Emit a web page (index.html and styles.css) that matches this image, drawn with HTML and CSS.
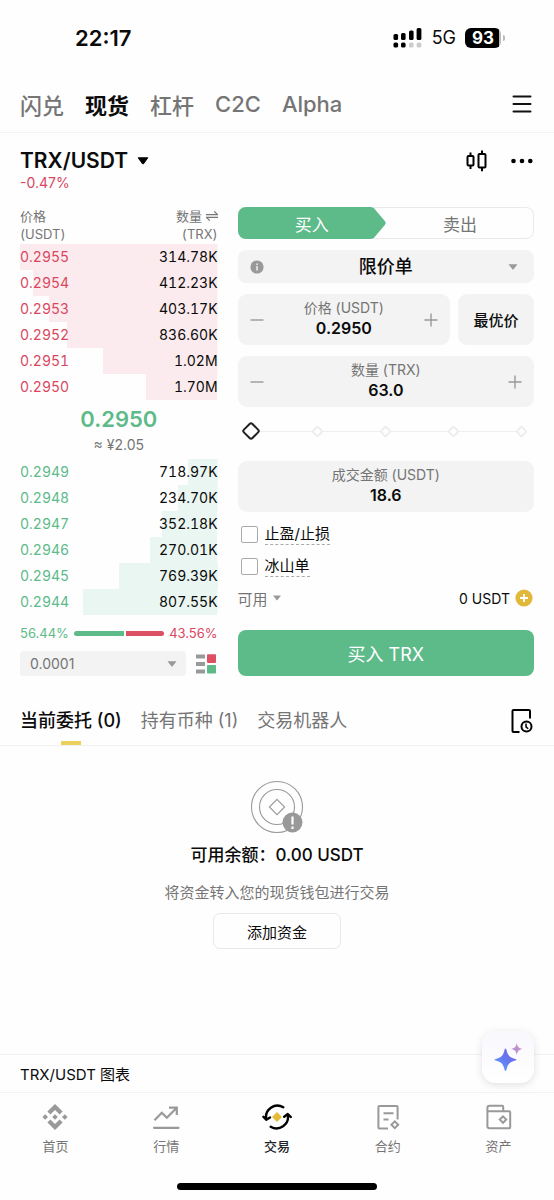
FILE: index.html
```html
<!DOCTYPE html>
<html lang="zh-CN">
<head>
<meta charset="utf-8">
<meta name="viewport" content="width=device-width, initial-scale=1">
<title>TRX/USDT 现货</title>
<link rel="stylesheet" href="styles.css">
</head>
<body>
<div class="app">
  <div class="status">
    <span class="status-time">22:17</span>
    <div class="status-right">
      <svg width="30" height="20" viewBox="0 0 30 20" aria-hidden="true">
        <rect x="0.5" y="6" width="4.6" height="6" rx="1.5"/><rect x="8" y="5" width="4.6" height="7" rx="1.5"/>
        <rect x="16" y="2.5" width="4.6" height="9.5" rx="1.5"/><rect x="23.6" y="0" width="4.8" height="12" rx="1.5"/>
        <rect x="0.5" y="14.6" width="4.6" height="5" rx="1.6"/><rect x="8" y="14.6" width="4.6" height="5" rx="1.6"/>
        <rect x="16" y="14.6" width="4.6" height="5" rx="1.6" fill="#ccc"/><rect x="23.6" y="14.6" width="4.8" height="5" rx="1.6" fill="#ccc"/>
      </svg>
      <span class="status-net">5G</span>
      <span class="battery">93</span>
    </div>
  </div>

  <nav class="modes">
    <a href="#">闪兑</a><a href="#" class="on">现货</a><a href="#">杠杆</a><a href="#">C2C</a><a href="#">Alpha</a>
    <button class="icon-btn push" aria-label="菜单">
      <svg width="20" height="20" viewBox="0 0 20 20" stroke="#111" stroke-width="2" stroke-linecap="round"><path d="M1.5 2.5h17M1.5 10h17M1.5 17.5h17"/></svg>
    </button>
  </nav>

  <header class="pair">
    <div>
      <button class="pair-name">TRX/USDT <svg width="12" height="8" viewBox="0 0 12 8"><path d="M1.2.8h9.600L6.500 6.800q-.5.6-1 0z" stroke="#000" stroke-linejoin="round"/></svg></button>
      <div class="pair-change">-0.47%</div>
    </div>
    <div class="pair-tools">
      <button class="icon-btn" aria-label="K线">
        <svg width="22" height="22" viewBox="0 0 22 22" fill="none" stroke="#000" stroke-width="2"><rect x="1.500" y="6" width="6" height="9.600" rx="1"/><path d="M4.500 2.600V6M4.500 15.600V19"/><rect x="12.500" y="4" width="7" height="13.600" rx="1"/><path d="M16 .5V4M16 17.600v3.600"/></svg>
      </button>
      <button class="icon-btn" aria-label="更多">
        <svg width="22" height="6" viewBox="0 0 22 6"><circle cx="2.500" cy="3" r="2.300"/><circle cx="11" cy="3" r="2.300"/><circle cx="19.300" cy="3" r="2.300"/></svg>
      </button>
    </div>
  </header>

  <main class="trade">
    <section class="book">
      <table class="levels asks">
        <thead><tr><th>价格<br>(USDT)</th><th>数量 <svg width="12" height="10" viewBox="0 0 12 10" fill="none" stroke="#757575" stroke-width="1.2"><path d="M0 3.600h11.500L8.200.4M12 6.400H.5l3.300 3.200"/></svg><br>(TRX)</th></tr></thead>
        <tbody>
          <tr style="--depth:100%"><td>0.2955</td><td>314.78K</td></tr>
          <tr style="--depth:93%"><td>0.2954</td><td>412.23K</td></tr>
          <tr style="--depth:85%"><td>0.2953</td><td>403.17K</td></tr>
          <tr style="--depth:76%"><td>0.2952</td><td>836.60K</td></tr>
          <tr style="--depth:58%"><td>0.2951</td><td>1.02M</td></tr>
          <tr style="--depth:36%"><td>0.2950</td><td>1.70M</td></tr>
        </tbody>
      </table>
      <div class="last">
        <div class="last-price">0.2950</div>
        <div class="last-fiat">≈ ¥2.05</div>
      </div>
      <table class="levels bids">
        <tbody>
          <tr style="--depth:15%"><td>0.2949</td><td>718.97K</td></tr>
          <tr style="--depth:20%"><td>0.2948</td><td>234.70K</td></tr>
          <tr style="--depth:28%"><td>0.2947</td><td>352.18K</td></tr>
          <tr style="--depth:34%"><td>0.2946</td><td>270.01K</td></tr>
          <tr style="--depth:50%"><td>0.2945</td><td>769.39K</td></tr>
          <tr style="--depth:68%"><td>0.2944</td><td>807.55K</td></tr>
        </tbody>
      </table>
      <div class="ratio">
        <span class="up">56.44%</span>
        <div class="ratio-bar"><i class="ratio-buy" style="flex-grow:56.44"></i><i class="ratio-sell" style="flex-grow:43.56"></i></div>
        <span class="down">43.56%</span>
      </div>
      <div class="precision">
        <div class="pick">
          <select class="pick-small" aria-label="精度"><option>0.0001</option></select>
          <svg class="caret" width="10" height="6" viewBox="0 0 10 6"><path d="M.5.3h9L5.400 5.400q-.4.4-.8 0z"/></svg>
        </div>
        <button class="icon-btn" aria-label="盘口布局">
          <svg width="20" height="20" viewBox="0 0 20 20"><g fill="#999"><rect y=".5" width="9" height="4"/><rect y="8" width="9" height="4"/><rect y="15.500" width="9" height="4"/></g><rect x="11" y=".3" width="9" height="8.600" rx=".8" fill="#dc5063"/><rect x="11" y="11" width="9" height="8.600" rx=".8" fill="#5dba89"/></svg>
        </button>
      </div>
    </section>

    <form class="ticket">
      <div class="sides">
        <button type="button" class="side-buy">买入</button>
        <button type="button" class="side-sell">卖出</button>
      </div>
      <div class="pick">
        <svg class="info" width="14" height="14" viewBox="0 0 14 14"><circle cx="7" cy="7" r="6.600" fill="#999"/><path d="M7 6v4.600M7 3.400V5" stroke="#f3f3f3" stroke-width="1.400"/></svg>
        <select class="pick-type" aria-label="订单类型"><option>限价单</option></select>
        <svg class="caret" width="10" height="6" viewBox="0 0 10 6"><path d="M.5.3h9L5.400 5.400q-.4.4-.8 0z"/></svg>
      </div>
      <div class="price-row">
        <div class="field">
          <button type="button" class="icon-btn" aria-label="降低价格"><svg width="14" height="14" viewBox="0 0 14 14" stroke="#999" stroke-width="1.400"><path d="M.5 7h13"/></svg></button>
          <div class="field-mid"><label for="price">价格 (USDT)</label><input id="price" value="0.2950"></div>
          <button type="button" class="icon-btn" aria-label="提高价格"><svg width="14" height="14" viewBox="0 0 14 14" stroke="#999" stroke-width="1.400"><path d="M.5 7h13M7 .5v13"/></svg></button>
        </div>
        <button type="button" class="best">最优价</button>
      </div>
      <div class="field">
        <button type="button" class="icon-btn" aria-label="减少数量"><svg width="14" height="14" viewBox="0 0 14 14" stroke="#999" stroke-width="1.400"><path d="M.5 7h13"/></svg></button>
        <div class="field-mid"><label for="qty">数量 (TRX)</label><input id="qty" value="63.0"></div>
        <button type="button" class="icon-btn" aria-label="增加数量"><svg width="14" height="14" viewBox="0 0 14 14" stroke="#999" stroke-width="1.400"><path d="M.5 7h13M7 .5v13"/></svg></button>
      </div>
      <div class="slider">
        <div class="ticks"><i></i><i></i><i></i><i></i><i></i></div>
        <input type="range" min="0" max="100" value="0" aria-label="数量比例">
      </div>
      <div class="field">
        <div class="field-mid"><label for="total">成交金额 (USDT)</label><input id="total" value="18.6"></div>
      </div>
      <div class="options">
        <div class="option"><input type="checkbox" id="tpsl"><label for="tpsl">止盈/止损</label></div>
        <div class="option"><input type="checkbox" id="iceberg"><label for="iceberg">冰山单</label></div>
        <div class="avail">
          <button type="button" class="avail-label">可用 <svg width="8" height="6" viewBox="0 0 10 6" fill="#999"><path d="M0 0h10L5.600 5.600q-.6.6-1.200 0z"/></svg></button>
          <span class="avail-value">0 USDT</span>
          <button type="button" class="icon-btn" aria-label="充值"><svg width="18" height="18" viewBox="0 0 18 18"><circle cx="9" cy="9" r="8.600" fill="#e2b83a"/><path d="M9 5v8M5 9h8" stroke="#fff" stroke-width="1.800"/></svg></button>
        </div>
      </div>
      <button type="button" class="submit">买入 TRX</button>
    </form>
  </main>

  <nav class="tabs">
    <a href="#" class="on">当前委托 (0)</a><a href="#">持有币种 (1)</a><a href="#">交易机器人</a>
    <button class="icon-btn push" aria-label="历史委托">
      <svg width="24" height="24" viewBox="0 0 24 24" fill="none" stroke="#000" stroke-width="2"><path d="M9.500 23H3.500q-1 0-1-1V2q0-1 1-1H19q1 0 1 1v7.500"/><circle cx="16.500" cy="17.500" r="5"/><path d="M16 14.600v3.200l2.200 2" stroke-width="1.500"/></svg>
    </button>
  </nav>

  <section class="empty">
    <svg width="54" height="54" viewBox="0 0 54 54" fill="none" stroke="#999" stroke-width="1.100"><circle cx="27" cy="27" r="25.500"/><circle cx="27" cy="27" r="17.500"/><path d="M27 19.400l7.600 7.600-7.600 7.600-7.600-7.600z"/><circle cx="42.500" cy="42.500" r="10" fill="#999" stroke="none"/><path d="M42.500 36.500v8M42.500 46.600v2.400" stroke="#fff" stroke-width="2.200"/></svg>
    <h2>可用余额：0.00 USDT</h2>
    <p>将资金转入您的现货钱包进行交易</p>
    <button class="add">添加资金</button>
  </section>

  <footer class="bottom">
    <div class="chart-bar">
      <a href="#">TRX/USDT 图表</a>
      <button class="ai" aria-label="AI 助手">
        <svg width="30" height="30" viewBox="0 0 30 30"><defs><linearGradient id="g1" x1="0" y1="1" x2="1" y2="0"><stop offset="0" stop-color="#5fb0ff"/><stop offset=".5" stop-color="#6379ee"/><stop offset="1" stop-color="#8b5fd8"/></linearGradient><linearGradient id="g2" x1="0" y1="1" x2="1" y2="0"><stop offset="0" stop-color="#a08ae0"/><stop offset="1" stop-color="#dc9ab8"/></linearGradient></defs><path fill="url(#g1)" d="M12.500 6.500q.6 0 .9 1c1.300 6 3 7.800 9.600 9.700q1 .4 0 1c-6.600 1.900-8.300 3.700-9.600 9.700q-.9 2-1.800 0c-1.300-6-3-7.800-9.600-9.700q-1-.6 0-1c6.600-1.900 8.300-3.700 9.600-9.700q.3-1 .9-1z"/><path fill="url(#g2)" d="M23.800 1c.8 3.800 1.800 5 5.700 5.900-3.900.9-4.900 2-5.700 5.800-.8-3.800-1.800-4.900-5.700-5.800 3.900-.9 4.900-2.100 5.700-5.900z"/></svg>
      </button>
    </div>
    <nav class="dock">
      <a href="#"><svg width="28" height="28" viewBox="0 0 28 28" fill="#999"><path d="M14 1l7.600 7.600-3 3L14 7l-4.600 4.600-3-3zM14 27l7.600-7.600-3-3L14 21l-4.600-4.600-3 3zM14 11.200l2.800 2.800-2.800 2.800-2.800-2.800zM4.200 11.200L7 14l-2.800 2.800L1.400 14zM23.800 11.200l2.800 2.800-2.800 2.800L21 14z"/></svg>首页</a>
      <a href="#"><svg width="28" height="28" viewBox="0 0 28 28" fill="none" stroke="#999" stroke-width="2.200"><path d="M2 24.800h24.500" stroke-linecap="round"/><path d="M2.500 17.200l7.300-7.400 5 5L24 5.400M17 4.600h7.800V12"/></svg>行情</a>
      <a href="#" class="on"><svg width="32" height="28" viewBox="0 0 32 28" fill="none" stroke="#000" stroke-width="2.400" stroke-linecap="round" stroke-linejoin="round"><path d="M22.300 4.200A11.500 11.500 0 0 0 5.200 16.200M2.400 13.800l2.800 3 3.800-2.400M9.700 23.800A11.500 11.500 0 0 0 26.800 11.800M23.200 13.800l3.600-2.800 3 3"/><path d="M16 9l5 5-5 5-5-5z" fill="#e6bb3c" stroke="none"/></svg>交易</a>
      <a href="#"><svg width="28" height="28" viewBox="0 0 28 28" fill="none" stroke="#999" stroke-width="2"><path d="M14 25.400H5.400q-1 0-1-1V4q0-1 1-1h17.200q1 0 1 1v12.500M9.500 10.200h10M9.500 16.400h5"/><path d="M20.800 18.400l3.400 3.400-3.400 3.400-3.400-3.400z"/></svg>合约</a>
      <a href="#"><svg width="28" height="28" viewBox="0 0 28 28" fill="none" stroke="#999" stroke-width="2"><path d="M2.400 8.200V5q0-2.200 2.200-2.200h12.600q1 0 1 1v4.400M2.400 8.200h21.800q1 0 1 1v15q0 1-1 1H4.600q-2.200 0-2.200-2.200z"/><path d="M18 13.400l3.200 3.200-3.200 3.200-3.200-3.200z"/></svg>资产</a>
    </nav>
    <div class="home-bar"></div>
  </footer>
</div>
</body>
</html>
```

FILE: styles.css
```css
* { box-sizing: border-box; }

body {
  margin: 0;
  background: #fefefe;
  color: #0b0b0b;
  font-family: Inter, "Noto Sans CJK SC", sans-serif;
  font-size: 14px;
}

a { color: inherit; text-decoration: none; }
svg { display: block; flex: none; }

button, input, select {
  font: inherit;
  color: inherit;
  border: 0;
  background: none;
  padding: 0;
  margin: 0;
  outline: 0;
}

.app { min-height: 100vh; display: flex; flex-direction: column; }
.icon-btn { display: flex; align-items: center; justify-content: center; }
.push { margin-left: auto; }
.up { color: #5dba89; }
.down { color: #d9475f; }

/* status bar */
.status {
  display: flex;
  justify-content: space-between;
  align-items: center;
  height: 75px;
  padding: 0 49px 0 75px;
}
.status-time { font-size: 22px; font-weight: 600; }
.status-right { display: flex; align-items: center; gap: 9px; }
.status-net { font-size: 18px; line-height: 20px; }
.battery {
  position: relative;
  width: 36px;
  height: 20px;
  margin-right: 4px;
  border-radius: 6px;
  background: linear-gradient(90deg, #000 34px, #bbb 34px);
  color: #fff;
  font-size: 17px;
  font-weight: 700;
  line-height: 20px;
  text-align: center;
}
.battery::after {
  content: "";
  position: absolute;
  right: -4px;
  top: 7px;
  width: 2px;
  height: 6px;
  border-radius: 0 2px 2px 0;
  background: #bbb;
}

/* mode tabs */
.modes {
  display: flex;
  align-items: center;
  gap: 21px;
  height: 58px;
  padding: 0 22px 0 20px;
  border-bottom: 1px solid #f3f3f3;
  color: #757575;
  font-size: 22px;
  font-weight: 500;
}
.modes .on { color: #0b0b0b; font-weight: 700; }

/* pair header */
.pair {
  display: flex;
  justify-content: space-between;
  padding: 15px 21px 16px 20px;
}
.pair-name {
  display: flex;
  align-items: center;
  gap: 9px;
  font-size: 21px;
  font-weight: 600;
  line-height: 26px;
}
.pair-change { color: #d9475f; line-height: 17px; }
.pair-tools { display: flex; align-items: center; gap: 23px; height: 26px; }

/* order book and ticket */
.trade {
  display: grid;
  grid-template-columns: 2fr 3fr;
  gap: 20px;
  padding: 0 20px;
}
.book, .ticket { min-width: 0; }

.levels { width: 100%; border-collapse: collapse; font-variant-numeric: tabular-nums; }
.levels th {
  padding: 0 0 1px;
  color: #757575;
  font-size: 13px;
  font-weight: 400;
  line-height: 18px;
  text-align: left;
}
.levels th svg { display: inline-block; }
.levels td { height: 26px; padding: 0; line-height: 26px; }
.levels th:last-child, .levels td:last-child { text-align: right; }
.levels tbody tr { background: linear-gradient(var(--fill), var(--fill)) right / var(--depth) 100% no-repeat; }
.asks { --fill: #fbebee; }
.bids { --fill: #e9f6f1; }
.asks td:first-child { color: #d9475f; }
.bids td:first-child { color: #5dba89; }

.last { padding: 4px 0 3px; text-align: center; }
.last-price { color: #5dba89; font-size: 22px; font-weight: 600; line-height: 30px; }
.last-fiat { color: #757575; line-height: 22px; }

.ratio {
  display: flex;
  align-items: center;
  gap: 5px;
  margin-top: 8px;
  font-size: 13px;
  line-height: 20px;
}
.ratio-bar { display: flex; flex: 1; gap: 2px; }
.ratio-bar i { height: 5px; }
.ratio-buy { background: #5dba89; border-radius: 3px 0 0 3px; }
.ratio-sell { background: #dc5063; border-radius: 0 3px 3px 0; }

.precision { display: flex; gap: 10px; margin-top: 8px; }
.precision .pick { flex: 1; border-radius: 4px; }
.precision .icon-btn { margin-right: 2px; }

.pick {
  position: relative;
  display: flex;
  background: #f3f3f3;
  border-radius: 8px;
}
.pick select { appearance: none; width: 100%; }
.pick-small { height: 25px; padding: 0 10px; color: #757575; }
.pick-type {
  height: 33px;
  font-size: 18px;
  font-weight: 500;
  text-align: center;
  text-align-last: center;
}
.caret, .info { position: absolute; top: 0; bottom: 0; margin: auto 0; pointer-events: none; }
.caret { right: 16px; fill: #999; }
.precision .caret { right: 9px; }
.info { left: 12px; }

.ticket { display: flex; flex-direction: column; gap: 11px; }
.sides {
  display: grid;
  grid-template-columns: 1fr 1fr;
  height: 32px;
  border-radius: 8px;
  box-shadow: inset 0 0 0 1px #eaeaea;
  font-size: 17px;
  overflow: hidden;
}
.side-buy {
  background: #5dba89;
  color: #fff;
  clip-path: polygon(0 0, calc(100% - 15px) 0, calc(100% - 12px) 1px, calc(100% - 1px) 44%, 100% 50%, calc(100% - 1px) 56%, calc(100% - 12px) 31px, calc(100% - 15px) 100%, 0 100%);
}
.side-sell { color: #757575; }

.price-row { display: grid; grid-template-columns: 1fr 76px; gap: 8px; }
.field {
  display: flex;
  align-items: center;
  min-width: 0;
  height: 51px;
  padding: 0 12px;
  background: #f3f3f3;
  border-radius: 9px;
}
.field-mid { display: flex; flex: 1; flex-direction: column; min-width: 0; padding-bottom: 3px; text-align: center; }
.field label { color: #757575; line-height: 20px; }
.field input { width: 100%; height: 20px; font-size: 16px; font-weight: 600; text-align: center; }
.best { background: #f3f3f3; border-radius: 9px; font-size: 15px; font-weight: 500; }

.slider { position: relative; height: 26px; margin: 0 6px 6px; }
.ticks {
  display: flex;
  justify-content: space-between;
  align-items: center;
  height: 100%;
  padding: 0 2px;
  background: linear-gradient(#eee, #eee) center / calc(100% - 13px) 1px no-repeat;
}
.ticks i { width: 9px; height: 9px; border: 2px solid #eee; border-radius: 2px; background: #fefefe; transform: rotate(45deg); }
.slider input { position: absolute; inset: 0; width: 100%; height: 100%; appearance: none; }
.slider input::-webkit-slider-thumb {
  appearance: none;
  width: 14px;
  height: 14px;
  border: 2px solid #222;
  border-radius: 3px;
  background: #fefefe;
  transform: rotate(45deg);
}

.options { margin-top: -5px; }
.option { display: flex; align-items: center; gap: 7px; height: 32px; padding-left: 3px; }
.option input { appearance: none; width: 17px; height: 17px; border: 1px solid #aaa; border-radius: 2px; }
.option label { font-size: 15px; line-height: 21px; border-bottom: 1px dashed #aaa; }
.avail { display: flex; align-items: center; gap: 5px; height: 32px; }
.avail-label { display: flex; align-items: center; gap: 5px; margin-right: auto; color: #757575; font-size: 15px; }
.avail .icon-btn { margin-right: 1px; }
.submit { height: 46px; margin-top: 5px; border-radius: 8px; background: #5dba89; color: #fff; font-size: 18px; }

/* account tabs */
.tabs {
  display: flex;
  align-items: center;
  gap: 19px;
  height: 50px;
  margin-top: 20px;
  padding: 0 20px;
  border-bottom: 1px solid #f0f0f0;
  color: #757575;
  font-size: 18px;
  line-height: 49px;
}
.tabs .on {
  color: #0b0b0b;
  font-weight: 500;
  background: linear-gradient(#ecd05c, #ecd05c) bottom / 20px 4px no-repeat;
}

.empty {
  display: flex;
  flex: 1;
  flex-direction: column;
  align-items: center;
  padding: 34px 20px;
}
.empty h2 { margin: 8px 0 0; font-size: 17px; font-weight: 500; line-height: 26px; }
.empty p { margin: 14px 0 9px; color: #757575; font-size: 15px; line-height: 22px; }
.add { height: 36px; padding: 0 33px; border: 1px solid #e8e8e8; border-radius: 7px; font-size: 15px; }

/* chart bar and dock */
.chart-bar {
  position: relative;
  display: flex;
  align-items: center;
  height: 39px;
  padding: 0 20px;
  border-top: 1px solid #f0f0f0;
  border-bottom: 1px solid #f3f3f3;
  font-size: 15px;
}
.ai {
  position: absolute;
  right: 20px;
  bottom: 9px;
  display: flex;
  align-items: center;
  justify-content: center;
  width: 52px;
  height: 52px;
  border-radius: 14px;
  background: linear-gradient(#f8f8fd, #fff);
  box-shadow: 0 2px 8px rgba(0, 0, 0, 0.12);
}
.dock { display: grid; grid-template-columns: repeat(5, 1fr); padding-top: 10px; color: #757575; font-size: 13px; }
.dock a { display: flex; flex-direction: column; align-items: center; gap: 5px; line-height: 20px; }
.dock .on { color: #1e2329; font-weight: 500; }
.home-bar { width: 36%; height: 7px; margin: 27px auto 10px; border-radius: 4px; background: #000; }
```
